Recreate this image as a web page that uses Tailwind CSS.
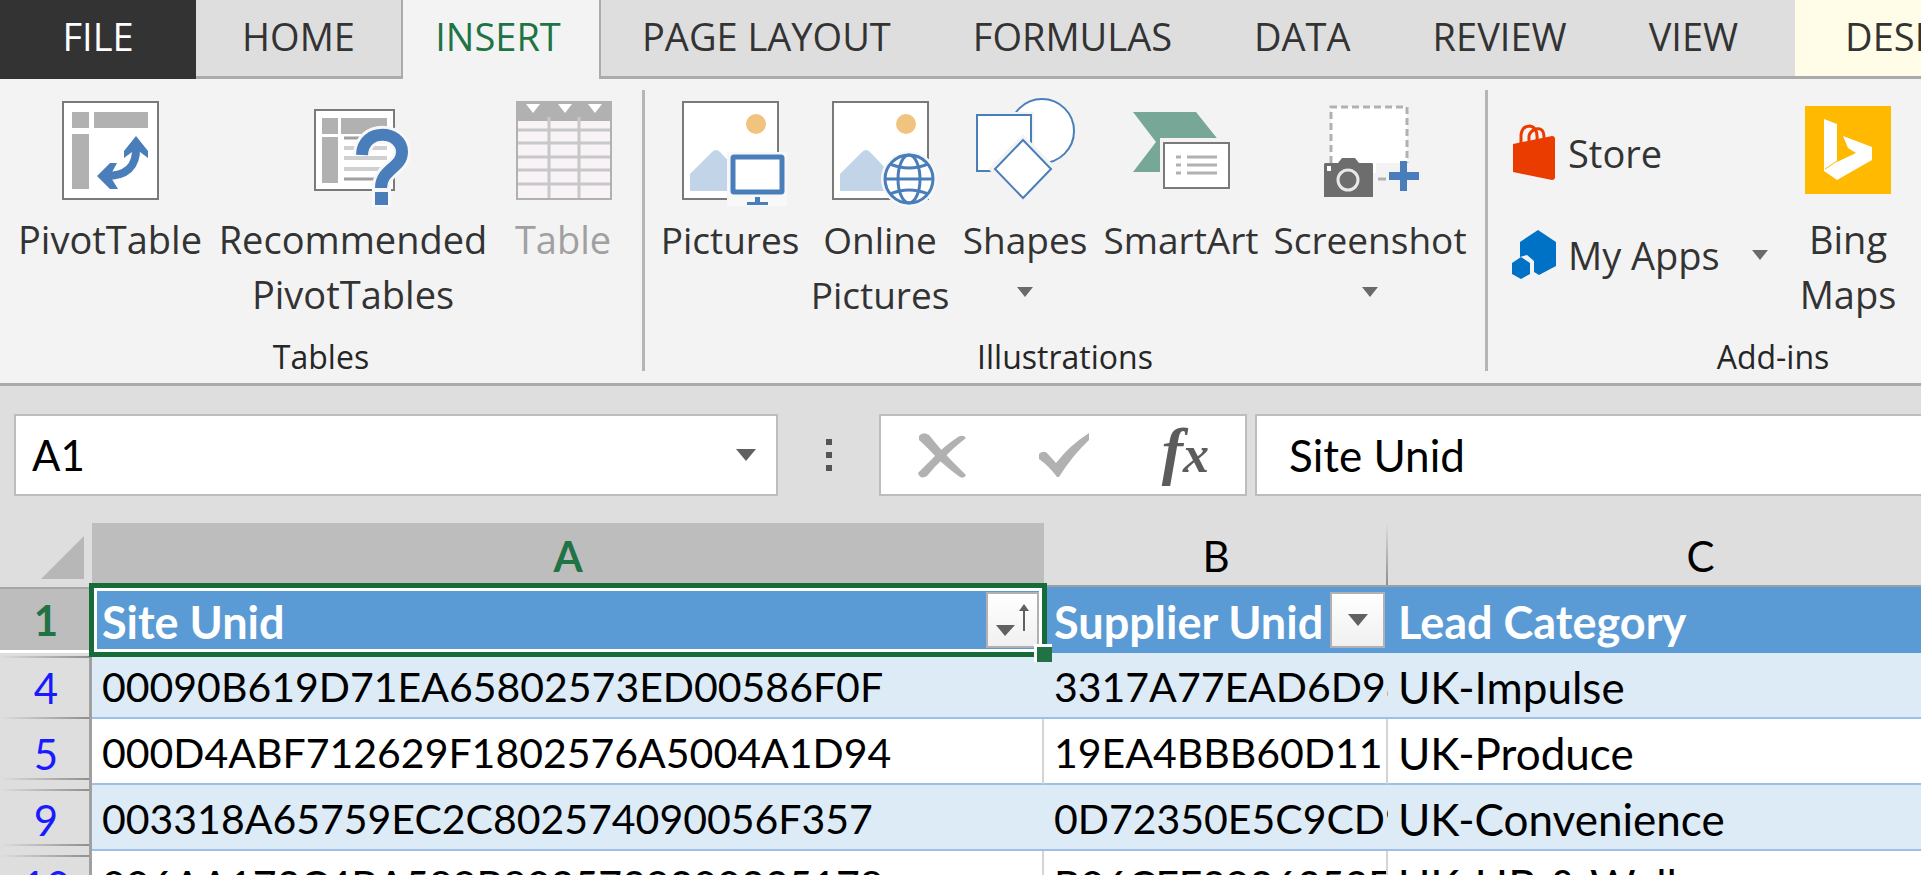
<!DOCTYPE html>
<html lang="en">
<head>
    <meta charset="UTF-8">
    <meta name="viewport" content="width=device-width, initial-scale=1.0">
    <title>Spreadsheet</title>
    <script src="https://cdn.jsdelivr.net/npm/@tailwindcss/browser@4"></script>
</head>
<body class="h-screen overflow-hidden bg-[#dedede] font-['Open_Sans',sans-serif] text-[#333333]">

    <!-- Ribbon tabs -->
    <nav class="flex h-[79px] overflow-hidden whitespace-nowrap text-[38px] leading-[72px]">
        <button class="w-[196px] shrink-0 bg-[#333333] pb-2 text-white">FILE</button>
        <button class="w-[207px] shrink-0 border-r-2 border-b-3 border-[#ababab] pb-1">HOME</button>
        <button class="w-[196px] shrink-0 bg-[#f3f3f3] pr-1.5 pb-2 text-[#217346]">INSERT</button>
        <div class="flex grow border-b-3 border-l-2 border-[#ababab]">
            <button class="shrink-0 px-[41px] pb-1">PAGE LAYOUT</button>
            <button class="shrink-0 px-[41px] pb-1">FORMULAS</button>
            <button class="shrink-0 px-[41px] pb-1">DATA</button>
            <button class="shrink-0 px-[41px] pb-1">REVIEW</button>
            <button class="shrink-0 px-[41px] pb-1">VIEW</button>
            <button class="ml-4 shrink-0 bg-[#fffde7] px-[50px] pb-1">DESIGN</button>
        </div>
    </nav>

    <!-- Ribbon -->
    <section class="flex h-[307px] overflow-hidden border-b-3 border-[#ababab] bg-[#f3f3f3] pt-[11px] pb-3 text-[37px] leading-[55px] whitespace-nowrap">

        <div class="flex w-[645px] shrink-0 flex-col justify-between border-r-3 border-[#b5b5b5]">
            <div class="flex pt-[5px] pl-2 text-[38px]">
                <button class="flex w-[204px] flex-col items-center">
                    <svg class="mb-0.5 h-[115px] w-[120px]" viewBox="0 0 120 115">
                        <rect x="13" y="7" width="95" height="97" fill="#fff" stroke="#7a7a7a" stroke-width="2"/>
                        <path d="M22 17h17v16H22zM44 17h54v16H44zM22 39h17v55H22z" fill="#b1b1b1"/>
                        <path d="M86 52C87 72 76 81 56 81" fill="none" stroke="#4a7ebb" stroke-width="8"/>
                        <path d="M86 41L98 56V63L86 54L74 63V56ZM47 81L60 68H67L60 81L68 94H60Z" fill="#4a7ebb"/>
                    </svg>
                    PivotTable
                </button>
                <button class="flex w-[282px] flex-col items-center">
                    <svg class="mb-0.5 h-[115px] w-[120px]" viewBox="0 0 120 115">
                        <rect x="22" y="15" width="79" height="80" fill="#fff" stroke="#7a7a7a" stroke-width="2"/>
                        <path d="M29 23h16v16H29zM48 23h46v16H48zM29 42h16v46H29z" fill="#b1b1b1"/>
                        <path d="M51 53h43M51 63h43M51 74h43" stroke="#d0d0d0" stroke-width="4"/>
                        <path d="M51 43h43M51 84h43" stroke="#a0a0a0" stroke-width="3"/>
                        <path d="M69 60C70 32 109 35 109 57C109 73 88 74 88 93" fill="none" stroke="#f8f8f8" stroke-width="18"/>
                        <path d="M79 92h19v20H79z" fill="#f8f8f8"/>
                        <path d="M69 60C70 32 109 35 109 57C109 73 88 74 88 93" fill="none" stroke="#4a7ebb" stroke-width="12"/>
                        <path d="M82 97h13v13H82z" fill="#4a7ebb"/>
                    </svg>
                    Recommended<br>PivotTables
                </button>
                <button class="ml-1 flex w-[130px] flex-col items-center text-[#a0a0a0]" disabled>
                    <svg class="mb-0.5 h-[115px] w-[120px]" viewBox="0 0 120 115">
                        <rect x="14" y="7" width="94" height="97" fill="#f8f3f7" stroke="#b1b1b1" stroke-width="2"/>
                        <path d="M13 6h96v20H13z" fill="#b1b1b1"/>
                        <path d="M15 35h92M15 48h92M15 62h92M15 75h92M15 89h92M46 22v81M76 22v81" stroke="#c8c8c8" stroke-width="3"/>
                        <path d="M23 9h14l-7 9zM55 9h14l-7 9zM85 9h14l-7 9z" fill="#fff"/>
                    </svg>
                    Table
                </button>
            </div>
            <div class="text-center text-[32px] leading-7 text-[#262626]">Tables</div>
        </div>

        <div class="flex w-[843px] shrink-0 flex-col justify-between border-r-3 border-[#b5b5b5]">
            <div class="flex items-start pt-[5px] pl-2.5">
                <button class="flex w-[150px] flex-col items-center">
                    <svg class="mb-0.5 h-[115px] w-[120px]" viewBox="0 0 120 115">
                        <rect x="13" y="7" width="95" height="97" fill="#fff" stroke="#7a7a7a" stroke-width="2"/>
                        <circle cx="86" cy="29" r="10" fill="#f0c37e"/>
                        <path d="M20 96V79L42 57Q46 53 50 57L70 78V96Z" fill="#c1d4e8"/>
                        <path d="M57 57h60v54H57z" fill="#f8f8f8"/>
                        <rect x="63" y="62" width="49" height="35" rx="1" fill="#fff" stroke="#4a7ebb" stroke-width="5"/>
                        <path d="M85 102h5v5h8v3H77v-3h8z" fill="#4a7ebb"/>
                    </svg>
                    Pictures
                </button>
                <button class="flex w-[150px] flex-col items-center">
                    <svg class="mb-0.5 h-[115px] w-[120px]" viewBox="0 0 120 115">
                        <rect x="13" y="7" width="95" height="97" fill="#fff" stroke="#7a7a7a" stroke-width="2"/>
                        <circle cx="86" cy="29" r="10" fill="#f0c37e"/>
                        <path d="M20 96V79L42 57Q46 53 50 57L70 78V96Z" fill="#c1d4e8"/>
                        <circle cx="89" cy="84" r="28" fill="#f8f8f8"/>
                        <g fill="none" stroke="#4a7ebb" stroke-width="3">
                            <circle cx="89" cy="84" r="24" fill="#fff"/>
                            <ellipse cx="89" cy="84" rx="11" ry="24"/>
                            <path d="M65 84h48M70 69Q89 77 108 69M70 99Q89 91 108 99"/>
                        </g>
                    </svg>
                    Online<br>Pictures
                </button>
                <button class="flex w-[140px] flex-col items-center">
                    <svg class="mb-0.5 h-[115px] w-[120px]" viewBox="0 0 120 115">
                        <circle cx="77" cy="36" r="32" fill="#fff" stroke="#4a7ebb" stroke-width="2"/>
                        <path d="M8 17h61v62H8z" fill="#f3f3f3"/>
                        <rect x="12" y="20" width="54" height="56" fill="#fff" stroke="#4a7ebb" stroke-width="2"/>
                        <path d="M58 45L87 74L58 104L29 74Z" fill="#f3f3f3" stroke="#f3f3f3" stroke-width="8"/>
                        <path d="M58 45L86 74L58 103L30 74Z" fill="#fff" stroke="#4a7ebb" stroke-width="2"/>
                    </svg>
                    Shapes
                    <svg class="mt-5 h-2.5 w-4" viewBox="0 0 16 10"><path d="M0 0h16L8 10z" fill="#6a6a6a"/></svg>
                </button>
                <button class="flex w-[172px] flex-col items-center">
                    <svg class="mb-0.5 h-[115px] w-[120px]" viewBox="0 0 120 115">
                        <path d="M12 17H75L99 47L75 77H12L35 47Z" fill="#76a797"/>
                        <path d="M39 43h74v55H39z" fill="#f3f3f3"/>
                        <rect x="43" y="48" width="65" height="45" fill="#fff" stroke="#7a7a7a" stroke-width="2"/>
                        <path d="M55 62h5M55 70h5M55 78h5M66 62h30M66 70h30M66 78h30" stroke="#b1b1b1" stroke-width="3"/>
                    </svg>
                    SmartArt
                </button>
                <button class="flex w-[206px] flex-col items-center">
                    <svg class="mb-0.5 h-[115px] w-[120px]" viewBox="0 0 120 115">
                        <path d="M21 12h76v56H66v10H21z" fill="#fff"/>
                        <path d="M21 68V12H97V68" fill="none" stroke="#b1b1b1" stroke-width="3" stroke-dasharray="7 4"/>
                        <path d="M68 84h8" stroke="#b1b1b1" stroke-width="3"/>
                        <path d="M15 68H28L32 63H45L49 68H62Q63 68 63 70V102H14V70Q14 68 15 68Z" fill="#6d6d6d"/>
                        <path d="M17 71h4v5h-4z" fill="#fff"/>
                        <circle cx="38" cy="85" r="10" fill="#6d6d6d" stroke="#e8e8e8" stroke-width="3"/>
                        <path d="M90 66h7v11h12v8H97v11h-7V85H79v-8h11z" fill="#4a7ebb"/>
                    </svg>
                    Screenshot
                    <svg class="mt-5 h-2.5 w-4" viewBox="0 0 16 10"><path d="M0 0h16L8 10z" fill="#6a6a6a"/></svg>
                </button>
            </div>
            <div class="text-center text-[32px] leading-7 text-[#262626]">Illustrations</div>
        </div>

        <div class="flex w-[570px] shrink-0 flex-col justify-between">
            <div class="flex items-start pt-[5px] pl-6 text-[38px]">
                <div class="flex w-[281px] flex-col items-start gap-[42px] pt-7">
                    <button class="flex h-[60px] items-center gap-3">
                        <svg class="h-[58px] w-11" viewBox="0 0 44 58">
                            <path d="M9 20V11Q10 2 18 2Q26 3 25 16M17 18V12Q18 7 24 5Q32 3 32 14" fill="none" stroke="#eb3c00" stroke-width="3"/>
                            <path d="M1 20L40 12Q43 12 43 15V53Q43 56 40 56L1 48Z" fill="#eb3c00"/>
                        </svg>
                        Store
                    </button>
                    <button class="flex h-[60px] items-center gap-3">
                        <svg class="h-[50px] w-11" viewBox="0 0 44 50">
                            <path d="M26 0L44 12V36L27 45L22 42V31L15 25L8 27V12Z" fill="#0072c6"/>
                            <path d="M9 27L18 33V44L9 49L0 44V33Z" fill="#0072c6"/>
                        </svg>
                        My Apps
                        <svg class="ml-5 h-2.5 w-4" viewBox="0 0 16 10"><path d="M0 0h16L8 10z" fill="#6a6a6a"/></svg>
                    </button>
                </div>
                <button class="flex w-[110px] flex-col items-center">
                    <svg class="mt-[11px] mb-[18px] h-[88px] w-[86px]" viewBox="0 0 86 88">
                        <path d="M0 0h86v88H0z" fill="#ffb900"/>
                        <path d="M19 13L32 18V56L51 47L43 42L38 30L67 41V54L32 74L19 65Z" fill="#fff"/>
                        <path d="M20 63L32 55" stroke="#ffb900" stroke-width="1"/>
                    </svg>
                    Bing<br>Maps
                </button>
            </div>
            <div class="text-center text-[32px] leading-7 text-[#262626]">Add-ins</div>
        </div>
    </section>

    <!-- Formula bar -->
    <section class="flex h-[137px] overflow-hidden pt-7 pl-3.5 font-['Lato',sans-serif] text-[42px] text-black">
        <div class="flex h-[82px] w-[764px] shrink-0 items-center border-2 border-[#bdbdbd] bg-white pr-5">
            <input aria-label="Name box" class="min-w-0 grow pl-4 outline-none" value="A1">
            <button aria-label="Open name list">
                <svg class="h-3 w-5" viewBox="0 0 20 12"><path d="M0 0h20L10 12z" fill="#606060"/></svg>
            </button>
        </div>
        <div class="flex h-[82px] w-[101px] shrink-0 items-center justify-center">
            <svg class="h-8 w-1.5" viewBox="0 0 6 32"><path d="M0 0h6v6H0zM0 13h6v6H0zM0 26h6v6H0z" fill="#555"/></svg>
        </div>
        <div class="flex h-[82px] w-[368px] shrink-0 items-center justify-between border-2 border-[#bdbdbd] bg-white pr-9 pl-9">
            <button aria-label="Cancel">
                <svg class="h-[46px] w-[50px]" viewBox="0 0 50 46">
                    <path d="M2 4Q6 -1 12 3Q22 16 34 28L49 43Q47 47 43 45Q29 35 19 25Q9 14 2 8Z" fill="#b1b1b1"/>
                    <path d="M49 6Q46 2 41 5Q26 15 16 26Q7 35 1 41Q3 48 10 44Q17 35 27 26Q36 16 49 6Z" fill="#b1b1b1"/>
                </svg>
            </button>
            <button aria-label="Enter">
                <svg class="h-[46px] w-[52px]" viewBox="0 0 52 46">
                    <path d="M1 22Q5 18 9 21L18 31Q32 13 51 1V8Q34 24 21 45H19Q11 34 1 27Z" fill="#b1b1b1"/>
                </svg>
            </button>
            <button aria-label="Insert function" class="flex items-baseline pb-1 font-['Liberation_Serif',serif] leading-[70px] font-bold text-[#5c5c5c] italic">
                <span class="text-[64px]">f</span><span class="text-[52px]">x</span>
            </button>
        </div>
        <input aria-label="Formula" class="ml-2 h-[82px] min-w-0 grow border-2 border-r-0 border-[#bdbdbd] bg-white pl-8 text-[44px] outline-none" value="Site Unid">
    </section>

    <!-- Sheet -->
    <table class="w-full table-fixed border-separate border-spacing-0 overflow-hidden font-['Lato',sans-serif] text-[42px] leading-[60px] whitespace-nowrap text-black">
        <colgroup>
            <col class="w-[92px]">
            <col class="w-[952px]">
            <col class="w-[344px]">
            <col>
        </colgroup>
        <thead>
            <tr class="h-16">
                <th class="p-0" aria-label="Select all">
                    <svg class="mt-1 ml-[41px] h-[43px] w-[43px]" viewBox="0 0 43 43"><path d="M43 0V43H0Z" fill="#b7b7b7"/></svg>
                </th>
                <th class="border-b-2 border-[#9f9f9f] bg-[#bdbdbd] p-0 pt-1 leading-[58px] font-bold text-[#217346]">A</th>
                <th class="relative border-b-2 border-[#9f9f9f] p-0 pt-1 leading-[58px] font-normal">B
                    <div class="absolute top-0 right-0 h-full w-0.5 bg-linear-to-b from-[#dedede] to-[#8f8f8f]"></div>
                </th>
                <th class="border-b-2 border-[#9f9f9f] p-0 pt-1 pl-[92px] leading-[58px] font-normal">C</th>
            </tr>
        </thead>
        <tbody>
            <tr class="h-[66px] bg-[#5b9bd5] text-[45px] font-bold text-white">
                <th class="relative border-b-3 border-white bg-[#bdbdbd] p-0 pt-1 text-[42px] leading-[59px] text-[#217346]">1
                    <div class="absolute inset-x-0 top-0 h-0.5 bg-[#a6a6a6]"></div>
                </th>
                <td class="relative p-0 pl-2.5">
                    <div class="flex items-center justify-between pr-[5px]">
                        <span class="pt-1">Site Unid</span>
                        <button aria-label="Sorted ascending" class="flex h-14 w-[53px] items-center justify-center border-2 border-[#b1b1b1] bg-linear-to-b from-white to-[#f0f0f0]">
                            <svg class="h-[34px] w-[34px]" viewBox="0 0 34 34">
                                <path d="M0 22h19L9 33z" fill="#606060"/>
                                <path d="M28 28V4" stroke="#606060" stroke-width="2"/>
                                <path d="M28 1L33 8H23Z" fill="#606060"/>
                            </svg>
                        </button>
                    </div>
                    <!-- active cell outline and fill handle -->
                    <div class="pointer-events-none absolute -inset-x-[3px] -inset-y-1 z-10 border-5 border-[#166b38]">
                        <div class="h-full border-3 border-white"></div>
                        <div class="absolute -right-2.5 -bottom-2.5 h-4.5 w-4.5 border-t-3 border-l-3 border-white bg-[#217346]"></div>
                    </div>
                </td>
                <td class="p-0 pl-2.5">
                    <div class="flex items-center justify-between pr-[3px]">
                        <span class="pt-1">Supplier Unid</span>
                        <button aria-label="Filter Supplier Unid" class="flex h-14 w-[55px] shrink-0 items-center justify-center border-2 border-[#b1b1b1] bg-linear-to-b from-white to-[#f0f0f0]">
                            <svg class="h-3 w-5" viewBox="0 0 20 12"><path d="M0 0h20L10 12z" fill="#606060"/></svg>
                        </button>
                    </div>
                </td>
                <td class="p-0 pt-1 pl-2.5">Lead Category</td>
            </tr>
            <tr class="h-[66px] bg-[#ddebf7]">
                <th class="relative border-r-3 border-[#a0a0a0] bg-[#dedede] p-0 pt-1 pl-[3px] font-normal text-[#1a1aff]">4
                    <div class="absolute inset-x-0 top-[3px] h-0.5 bg-linear-to-r from-[#dedede] to-[#8f8f8f]"></div>
                    <div class="absolute inset-x-0 bottom-0 h-0.5 bg-linear-to-r from-[#dedede] to-[#8f8f8f]"></div>
                </th>
                <td class="border-b-2 border-[#9bc2e6] p-0 pt-1 pl-2.5 text-[41px]">00090B619D71EA65802573ED00586F0F</td>
                <td class="overflow-hidden border-b-2 border-[#9bc2e6] p-0 pt-1 pl-2.5 text-[41px]">3317A77EAD6D98</td>
                <td class="border-b-2 border-[#9bc2e6] p-0 pt-1 pl-2.5 text-[44px]">UK-Impulse</td>
            </tr>
            <tr class="h-[66px] bg-white">
                <th class="relative border-r-3 border-[#a0a0a0] bg-[#dedede] p-0 pt-1 pl-[3px] font-normal text-[#1a1aff]">5
                    <div class="absolute inset-x-0 bottom-[5px] h-0.5 bg-linear-to-r from-[#dedede] to-[#8f8f8f]"></div>
                </th>
                <td class="border-r-2 border-b-2 border-r-[#d4d4d4] border-b-[#9bc2e6] p-0 pt-1 pl-2.5 text-[41px]">000D4ABF712629F1802576A5004A1D94</td>
                <td class="overflow-hidden border-r-2 border-b-2 border-r-[#d4d4d4] border-b-[#9bc2e6] p-0 pt-1 pl-2.5 text-[41px]">19EA4BBB60D11</td>
                <td class="border-b-2 border-[#9bc2e6] p-0 pt-1 pl-2.5 text-[44px]">UK-Produce</td>
            </tr>
            <tr class="h-[66px] bg-[#ddebf7]">
                <th class="relative border-r-3 border-[#a0a0a0] bg-[#dedede] p-0 pt-1 pl-[3px] font-normal text-[#1a1aff]">9
                    <div class="absolute inset-x-0 top-1 h-0.5 bg-linear-to-r from-[#dedede] to-[#8f8f8f]"></div>
                    <div class="absolute inset-x-0 bottom-[5px] h-0.5 bg-linear-to-r from-[#dedede] to-[#8f8f8f]"></div>
                </th>
                <td class="border-b-2 border-[#9bc2e6] p-0 pt-1 pl-2.5 text-[41px]">003318A65759EC2C802574090056F357</td>
                <td class="overflow-hidden border-b-2 border-[#9bc2e6] p-0 pt-1 pl-2.5 text-[41px]">0D72350E5C9CD9</td>
                <td class="border-b-2 border-[#9bc2e6] p-0 pt-1 pl-2.5 text-[44px]">UK-Convenience</td>
            </tr>
            <tr class="h-[66px] bg-white">
                <th class="relative border-r-3 border-[#a0a0a0] bg-[#dedede] p-0 pt-1 pl-[3px] font-normal text-[#1a1aff]">10
                    <div class="absolute inset-x-0 top-1 h-0.5 bg-linear-to-r from-[#dedede] to-[#8f8f8f]"></div>
                </th>
                <td class="border-r-2 border-b-2 border-r-[#d4d4d4] border-b-[#9bc2e6] p-0 pt-1 pl-2.5 text-[41px]">006AA173C4BA589B8025739200335178</td>
                <td class="overflow-hidden border-r-2 border-b-2 border-r-[#d4d4d4] border-b-[#9bc2e6] p-0 pt-1 pl-2.5 text-[41px]">B06CFF3926352F</td>
                <td class="border-b-2 border-[#9bc2e6] p-0 pt-1 pl-2.5 text-[44px]">UK-HB &amp; Well</td>
            </tr>
        </tbody>
    </table>

</body>
</html>
